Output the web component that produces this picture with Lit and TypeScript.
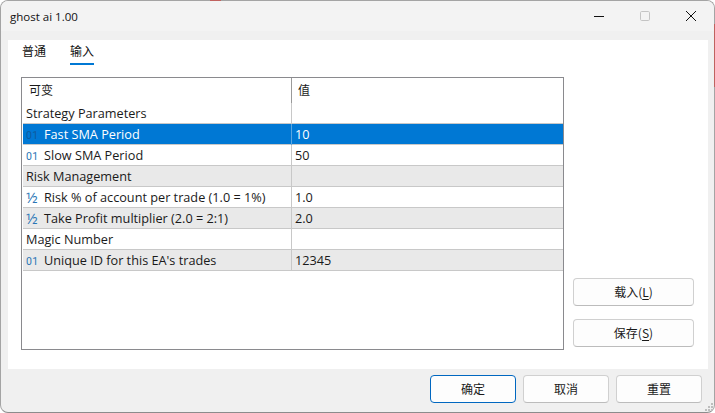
import { LitElement, html, css } from "lit";
import { customElement } from "lit/decorators.js";

type Row = { kind: "group" | "int" | "frac"; name: string; value: string; shade?: boolean; selected?: boolean };

const ROWS: Row[] = [
  { kind: "group", name: "Strategy Parameters", value: "" },
  { kind: "int", name: "Fast SMA Period", value: "10", selected: true },
  { kind: "int", name: "Slow SMA Period", value: "50" },
  { kind: "group", name: "Risk Management", value: "", shade: true },
  { kind: "frac", name: "Risk % of account per trade (1.0 = 1%)", value: "1.0" },
  { kind: "frac", name: "Take Profit multiplier (2.0 = 2:1)", value: "2.0", shade: true },
  { kind: "group", name: "Magic Number", value: "" },
  { kind: "int", name: "Unique ID for this EA's trades", value: "12345", shade: true },
];

@customElement("app-root")
export class AppRoot extends LitElement {
  static styles = css`
    :host {
      display: block;
      position: relative;
      width: 715px;
      height: 413px;
      overflow: hidden;
      background: #ffffff;
      font-family: "Open Sans", "Noto Sans CJK SC", sans-serif;
      font-size: 12.7px;
      color: #1a1a1a;
    }
    .cjk { font-family: "Noto Sans CJK SC", sans-serif; font-size: 12px; }
    .window {
      box-sizing: border-box;
      width: 715px;
      height: 413px;
      display: flex;
      flex-direction: column;
      border: 1px solid #a4a4a4;
      border-bottom-color: #8c8c8c;
      border-radius: 8px;
      background: #f0f0f0;
      overflow: hidden;
    }
    .titlebar {
      flex: none;
      height: 30px;
      display: flex;
      align-items: center;
      justify-content: space-between;
      background: #f3f3f3;
      padding-left: 9px;
    }
    .title { font-size: 11.5px; color: #111; }
    .controls { display: flex; height: 100%; }
    .ctl { width: 46px; display: flex; align-items: center; justify-content: center; }
    .band { flex: none; height: 9px; }
    .panel {
      flex: none;
      box-sizing: border-box;
      height: 329px;
      margin: 0 6px 0 7px;
      background: #fff;
      display: flex;
      flex-direction: column;
    }
    .tabs {
      flex: none;
      display: flex;
      gap: 24px;
      height: 25px;
      padding-left: 14px;
    }
    .tab {
      width: 24px;
      height: 25px;
      box-sizing: border-box;
      text-align: center;
      line-height: 21px;
      white-space: nowrap;
      color: #111;
    }
    .tab.on { border-bottom: 2px solid #0078d4; }
    .body {
      flex: 1;
      display: flex;
      padding: 12px 14px 19px 13px;
      min-height: 0;
    }
    .table {
      box-sizing: border-box;
      width: 543px;
      height: 273px;
      border: 1px solid #8a8a8e;
      padding-left: 1px;
      flex: none;
    }
    .head {
      display: grid;
      grid-template-columns: 269px 1fr;
      height: 25px;
      line-height: 24px;
    }
    .head .a { padding-left: 6px; border-right: 1px solid #9a9a9a; }
    .head .b { padding-left: 6px; }
    .row {
      display: grid;
      grid-template-columns: 269px 1fr;
      height: 21px;
      box-sizing: border-box;
      border-bottom: 1px solid #c8c8c8;
      line-height: 21px;
      white-space: nowrap;
    }
    .row.shade { background: #e9e9e9; }
    .row.sel { background: #0078d4; color: #fff; }
    .name {
      display: flex;
      align-items: center;
      padding-left: 3px;
      border-right: 1px solid #c8c8c8;
      overflow: hidden;
    }
    .row.sel .name { border-right-color: #5aa5e0; }
    .val { padding-left: 3px; }
    .ico { width: 18px; flex: none; color: #2a75b5; }
    .ico.int { font-family: "Roboto", sans-serif; font-size: 10.5px; letter-spacing: 0.3px; padding-top: 1px; }
    .ico.frac { font-size: 15px; }
    .row.sel .ico { color: #0f5a9e; }
    .side {
      flex: 1;
      display: flex;
      flex-direction: column;
      gap: 13px;
      align-items: flex-end;
      padding-top: 201px;
    }
    button {
      box-sizing: border-box;
      width: 121px;
      height: 28px;
      padding: 0 0 1px;
      background: #fdfdfd;
      border: 1px solid #d0d0d0;
      border-bottom-color: #bcbcbc;
      border-radius: 4px;
      font: inherit;
      color: #1a1a1a;
    }
    u { text-underline-offset: 2px; }
    .footer {
      flex: 1;
      display: flex;
      justify-content: flex-end;
      gap: 7px;
      padding: 6px 12px 0 0;
    }
    .footer button { width: 86px; }
    .footer button.primary { border: 1.5px solid #0067c0; }
    .sliver { position: absolute; background: #c0625f; }
    .sliver.top { left: 210px; top: 0; width: 11px; height: 1px; }
    .sliver.right { left: 714px; top: 24px; width: 1px; height: 63px; }
    .grip { position: absolute; right: 1px; bottom: 1px; }
  `;

  render() {
    return html`
      <div class="window">
        <div class="titlebar">
          <span class="title">ghost ai 1.00</span>
          <div class="controls">
            <div class="ctl">
              <svg width="12" height="12" viewBox="0 0 12 12"><path d="M1 6.5h10" stroke="#111" fill="none"/></svg>
            </div>
            <div class="ctl">
              <svg width="12" height="12" viewBox="0 0 12 12"><rect x="1.5" y="1.5" width="9" height="9" rx="1.2" fill="none" stroke="#c4c4c4"/></svg>
            </div>
            <div class="ctl">
              <svg width="12" height="12" viewBox="0 0 12 12"><path d="M1 1l10 10M11 1L1 11" stroke="#111" fill="none"/></svg>
            </div>
          </div>
        </div>
        <div class="band"></div>
        <div class="panel">
          <div class="tabs cjk">
            <div class="tab">普通</div>
            <div class="tab on">输入</div>
          </div>
          <div class="body">
            <div class="table">
              <div class="head cjk"><div class="a">可变</div><div class="b">值</div></div>
              ${ROWS.map(
                (r) => html`
                  <div class="row ${r.shade ? "shade" : ""} ${r.selected ? "sel" : ""}">
                    <div class="name">
                      ${r.kind === "int" ? html`<span class="ico int">01</span>` : ""}
                      ${r.kind === "frac" ? html`<span class="ico frac">½</span>` : ""}
                      <span>${r.name}</span>
                    </div>
                    <div class="val">${r.value}</div>
                  </div>
                `
              )}
            </div>
            <div class="side">
              <button class="cjk">载入(<u>L</u>)</button>
              <button class="cjk">保存(<u>S</u>)</button>
            </div>
          </div>
        </div>
        <div class="footer cjk">
          <button class="primary">确定</button>
          <button>取消</button>
          <button>重置</button>
        </div>
      </div>
      <div class="sliver top"></div>
      <div class="sliver right"></div>
      <svg class="grip" width="10" height="10" viewBox="0 0 10 10" fill="#bdbdbd">
        <rect x="7" y="1" width="2" height="2"/>
        <rect x="4" y="4" width="2" height="2"/><rect x="7" y="4" width="2" height="2"/>
        <rect x="1" y="7" width="2" height="2"/><rect x="4" y="7" width="2" height="2"/><rect x="7" y="7" width="2" height="2"/>
      </svg>
    `;
  }
}
